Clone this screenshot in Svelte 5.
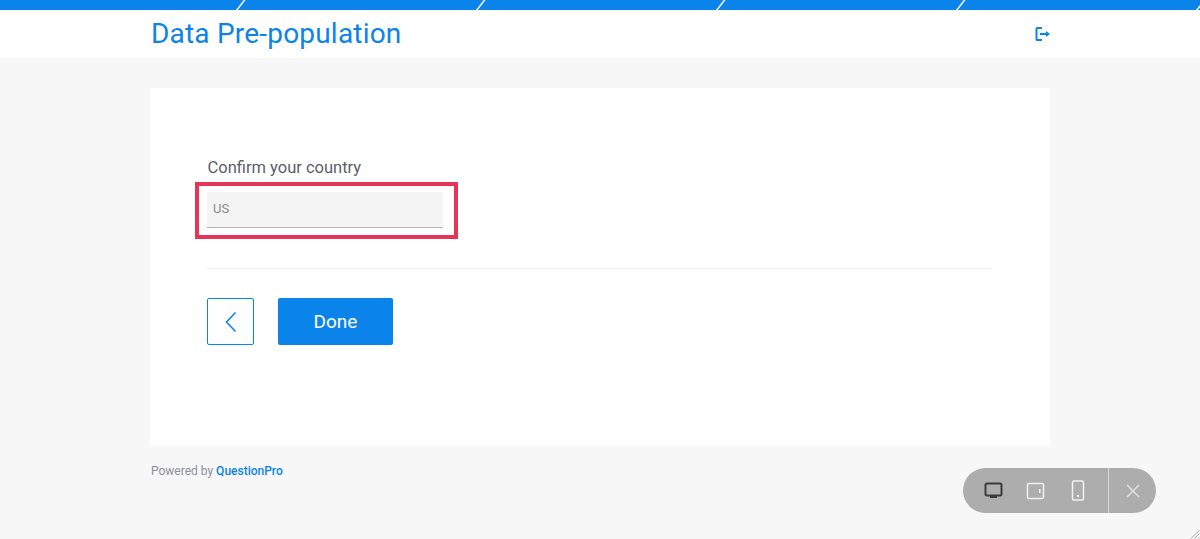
<script>
  const segments = [0, 1, 2, 3, 4];
</script>

<div class="page">
  <svg class="stripe" width="1200" height="10" viewBox="0 0 1200 10" aria-hidden="true">
    <rect width="1200" height="10" fill="#0a84ea" />
    {#each segments as i}
      <path d="M{236.5 + i * 240} 10.5 L{245 + i * 240} -0.5" stroke="#fff" stroke-width="1.5" />
    {/each}
  </svg>

  <header class="header">
    <div class="wrap header-row">
      <h1>Data Pre-population</h1>
      <svg class="exit" width="16" height="16" viewBox="0 0 16 16" fill="none" aria-hidden="true">
        <path d="M7 2H2.4a.9.9 0 0 0-.9.9v10.2a.9.9 0 0 0 .9.9H7" stroke="#0a84ea" stroke-width="2" />
        <path d="M5 8h7" stroke="#0a84ea" stroke-width="2.2" />
        <path d="M11 5l4 3-4 3z" fill="#0a84ea" />
      </svg>
    </div>
  </header>

  <main class="wrap">
    <section class="card">
      <label class="label" for="country">Confirm your country</label>
      <div class="field">
        <div class="input" id="country">US</div>
        <div class="highlight"></div>
      </div>
      <hr />
      <div class="actions">
        <button class="back" aria-label="Back">
          <svg width="14" height="22" viewBox="0 0 14 22" fill="none">
            <path d="M11.5 1.5 2.5 11l9 9.5" stroke="#0a84ea" stroke-width="1.6" />
          </svg>
        </button>
        <button class="done">Done</button>
      </div>
    </section>
    <p class="powered">Powered by <span>QuestionPro</span></p>
  </main>

  <div class="preview">
    <button class="tool" aria-label="Desktop">
      <svg width="20" height="18" viewBox="0 0 20 18" fill="none">
        <rect x="1.5" y="1.5" width="16" height="12" rx="1.5" stroke="#3a3a3a" stroke-width="2" />
        <rect x="6" y="14" width="7" height="2" fill="#3a3a3a" />
      </svg>
    </button>
    <button class="tool" aria-label="Tablet">
      <svg width="20" height="18" viewBox="0 0 20 18" fill="none">
        <rect x="1.5" y="1.5" width="16" height="15" rx="1.5" stroke="#f1f1f1" stroke-width="1.5" />
        <rect x="13" y="7" width="1.5" height="4" fill="#f1f1f1" />
      </svg>
    </button>
    <button class="tool" aria-label="Phone">
      <svg width="14" height="21" viewBox="0 0 14 21" fill="none">
        <rect x="1.5" y="1" width="11" height="19" rx="1.5" stroke="#f1f1f1" stroke-width="1.5" />
        <rect x="6" y="15" width="2" height="2" fill="#f1f1f1" />
      </svg>
    </button>
    <button class="close" aria-label="Close">
      <svg width="14" height="14" viewBox="0 0 14 14" fill="none">
        <path d="M1 1l12 12M13 1 1 13" stroke="#e4e4e4" stroke-width="1.4" />
      </svg>
    </button>
  </div>

  <svg class="grip" width="10" height="10" viewBox="0 0 10 10" aria-hidden="true">
    <path d="M9.5 1 1 9.5M9.5 4.5 4.5 9.5M9.5 8 8 9.5" stroke="#a8a8a8" stroke-width="1" />
  </svg>
</div>

<style>
  :global(body) {
    margin: 0;
    background: #f7f7f7;
  }

  .page {
    position: relative;
    height: 539px;
    overflow: hidden;
    background: #f7f7f7;
    font-family: Roboto, "Noto Sans", sans-serif;
  }

  .stripe {
    display: block;
  }

  .wrap {
    width: 900px;
    margin: 0 auto;
  }

  .header {
    height: 48px;
    background: #fff;
  }

  .header-row {
    height: 100%;
    display: flex;
    align-items: center;
    justify-content: space-between;
  }

  h1 {
    margin: 0 0 0 1px;
    font-size: 28px;
    font-weight: 400;
    line-height: 50px;
    color: #0a84ea;
    letter-spacing: 0.2px;
  }

  .exit {
    margin-right: -1px;
  }

  main {
    padding-top: 30px;
  }

  .card {
    box-sizing: border-box;
    height: 358px;
    padding: 68px 58px 0 57px;
    background: #fff;
  }

  .label {
    display: block;
    height: 24px;
    margin-left: 0.5px;
    font-size: 16.5px;
    line-height: 24px;
    color: #5c6068;
  }

  .field {
    position: relative;
    width: 236px;
    margin-top: 12px;
  }

  .input {
    box-sizing: border-box;
    height: 36px;
    padding: 7px 6px 0;
    background: #f4f4f4;
    border-bottom: 1px solid #b5b5b5;
    font-size: 13px;
    line-height: 20px;
    color: #8a8a8a;
  }

  .highlight {
    position: absolute;
    left: -12px;
    right: -15px;
    top: -10px;
    bottom: -11px;
    border: 4px solid #e63657;
  }

  hr {
    height: 1px;
    margin: 40px 0 29px;
    border: 0;
    background: #f0f0f0;
  }

  .actions {
    display: flex;
    gap: 24px;
  }

  button {
    padding: 0;
    border: 0;
    font-family: inherit;
    cursor: pointer;
  }

  .back {
    display: flex;
    align-items: center;
    justify-content: center;
    box-sizing: border-box;
    width: 47px;
    height: 47px;
    background: #fff;
    border: 1px solid #0a84ea;
    border-radius: 2px;
  }

  .done {
    width: 115px;
    height: 47px;
    background: #0a84ea;
    border-radius: 2px;
    color: #fff;
    font-size: 19px;
  }

  .powered {
    margin: 15px 0 0 1px;
    font-size: 12px;
    line-height: 20px;
    color: #8a919c;
  }

  .powered span {
    font-weight: 500;
    color: #0a84ea;
  }

  .preview {
    position: absolute;
    left: 963px;
    top: 468px;
    display: flex;
    align-items: center;
    width: 193px;
    height: 45px;
    padding-left: 10px;
    box-sizing: border-box;
    background: #adadad;
    border-radius: 23px;
  }

  .tool {
    display: flex;
    align-items: center;
    justify-content: center;
    width: 42px;
    height: 45px;
    background: none;
  }

  .close {
    display: flex;
    align-items: center;
    justify-content: center;
    flex: 1;
    height: 45px;
    margin-left: 9px;
    background: none;
    border-left: 1px solid #d4d4d4;
  }

  .grip {
    position: absolute;
    right: 0;
    bottom: 0;
  }
</style>
